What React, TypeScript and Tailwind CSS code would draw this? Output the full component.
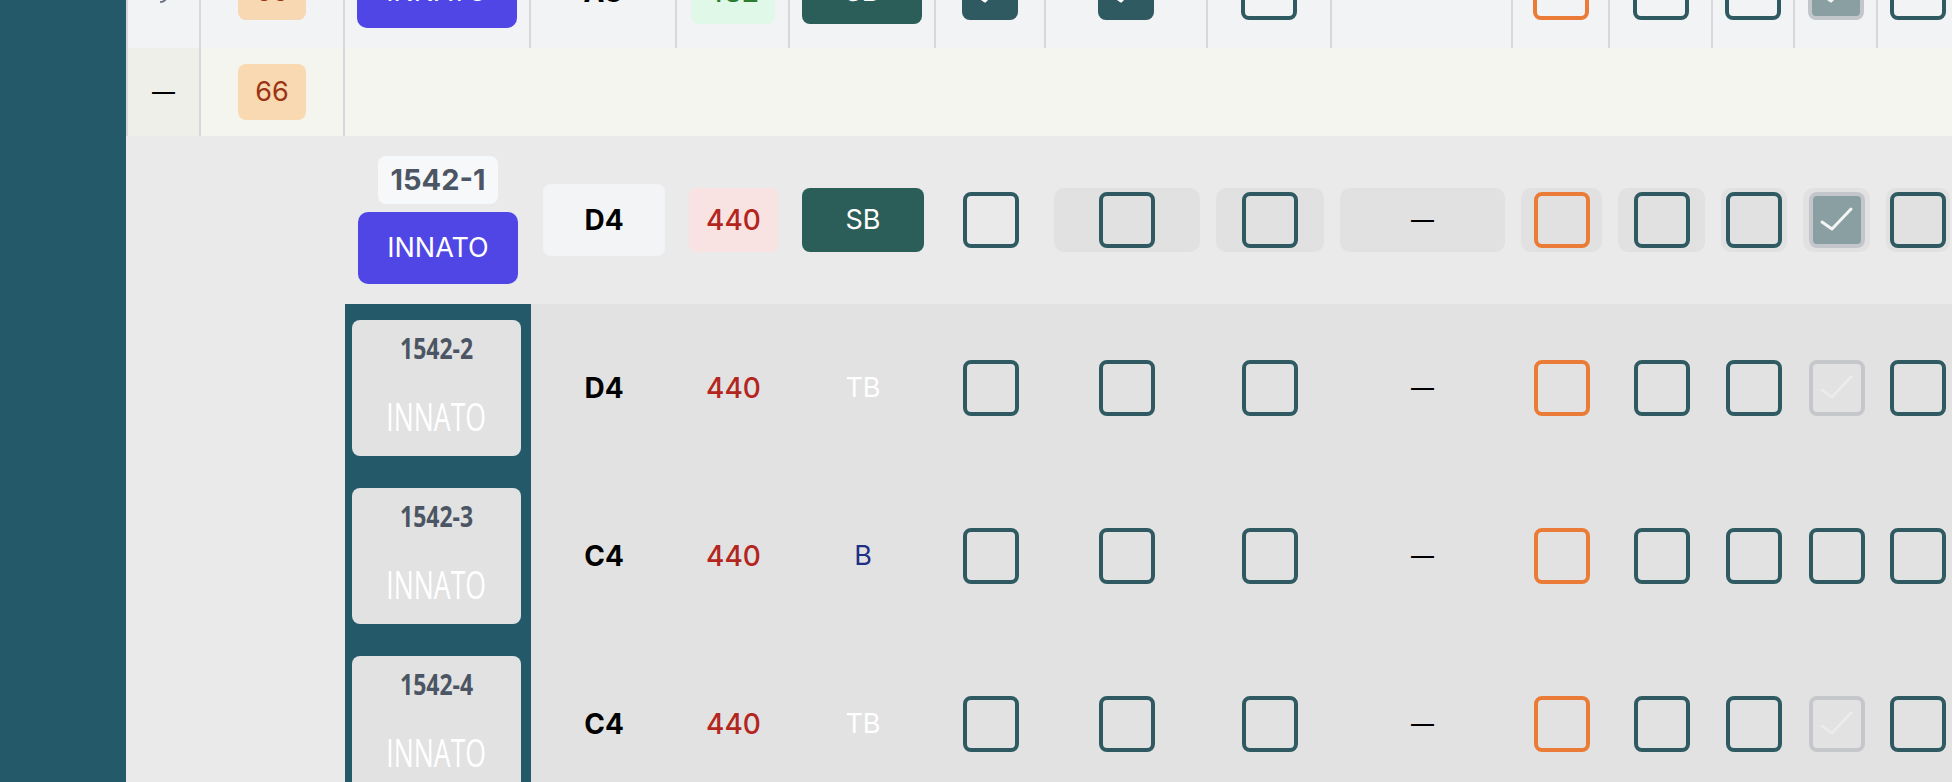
import React from "react";

const COLS =
  "grid grid-cols-[75px_144px_186px_146px_113px_146px_110px_162px_124px_181px_97px_103px_82px_83px_80px]";

type BoxKind = "teal" | "orange" | "filled" | "gray" | "ghost";

function Check({ color }: { color: string }) {
  return (
    <svg viewBox="0 0 48 48" className="block h-full w-full" fill="none">
      <polyline
        points="9,26 19,33 38,13"
        stroke={color}
        strokeWidth="3"
        strokeLinecap="round"
        strokeLinejoin="round"
      />
    </svg>
  );
}

function Box({ kind }: { kind: BoxKind }) {
  const cls: Record<BoxKind, string> = {
    teal: "border-4 border-[#2f5a61]",
    orange: "border-4 border-[#ea7c38]",
    filled: "border-4 border-[#2f5a61] bg-[#2f5a61]",
    gray: "border-4 border-[#c3c6ca] bg-[#8a9fa2]",
    ghost: "border-4 border-[#c5c7cb]",
  };
  return (
    <div className={`h-14 w-14 shrink-0 rounded-lg ${cls[kind]}`}>
      {kind === "filled" && <Check color="#ffffff" />}
      {kind === "gray" && <Check color="#f4f5f5" />}
      {kind === "ghost" && <Check color="#ebebeb" />}
    </div>
  );
}

function Cell({ children, className = "" }: { children?: React.ReactNode; className?: string }) {
  return <div className={`flex items-center justify-center ${className}`}>{children}</div>;
}

function Holder({ children }: { children: React.ReactNode }) {
  return (
    <div className="mx-2 flex h-16 w-full items-center justify-center rounded-[10px] bg-[#e1e1e1]">
      {children}
    </div>
  );
}

function Dash() {
  return <span className="text-[23px] leading-none text-black">—</span>;
}

const topBorder = "border-r-2 border-[#d7d8dd]";

function TopRow() {
  return (
    <div className={`${COLS} h-[112px] bg-[#f2f3f5]`}>
      <Cell className={`border-l-2 ${topBorder}`}>
        <svg width="24" height="24" viewBox="0 0 24 24" fill="none">
          <path d="M17 3 C17 10 16 17 13 20 C12 21.5 10.5 22 9 22" stroke="#6b7280" strokeWidth="2.2" strokeLinecap="round" />
        </svg>
      </Cell>
      <Cell className={topBorder}>
        <div className="flex h-14 w-[68px] items-center justify-center rounded-lg bg-[#f8d8b2] text-[27px] text-[#9a3412]">
          65
        </div>
      </Cell>
      <Cell className={topBorder}>
        <div className="flex h-[72px] w-40 items-center justify-center rounded-[10px] bg-[#4f46e5] text-[27px] text-white">
          INNATO
        </div>
      </Cell>
      <Cell className={`${topBorder} text-[28px] font-bold text-black`}>A3</Cell>
      <Cell className={topBorder}>
        <div className="flex h-16 w-[84px] items-center justify-center rounded-lg bg-[#dff8e7] text-[28px] font-medium text-[#2e7d32]">
          432
        </div>
      </Cell>
      <Cell className={topBorder}>
        <div className="flex h-16 w-[120px] items-center justify-center rounded-lg bg-[#2c5e59] text-[27px] text-white">
          SB
        </div>
      </Cell>
      <Cell className={topBorder}>
        <Box kind="filled" />
      </Cell>
      <Cell className={topBorder}>
        <Box kind="filled" />
      </Cell>
      <Cell className={topBorder}>
        <Box kind="teal" />
      </Cell>
      <Cell className={topBorder} />
      <Cell className={topBorder}>
        <Box kind="orange" />
      </Cell>
      <Cell className={topBorder}>
        <Box kind="teal" />
      </Cell>
      <Cell className={topBorder}>
        <Box kind="teal" />
      </Cell>
      <Cell className={topBorder}>
        <Box kind="gray" />
      </Cell>
      <Cell>
        <Box kind="teal" />
      </Cell>
    </div>
  );
}

function GroupRow() {
  return (
    <div className={`${COLS} h-[88px] bg-[#f4f5ef]`}>
      <Cell className={`border-l-2 ${topBorder} bg-[#efefe9]`}>
        <Dash />
      </Cell>
      <Cell className={topBorder}>
        <div className="flex h-14 w-[68px] items-center justify-center rounded-lg bg-[#f8d9b2] text-[27px] text-[#9a3412]">
          66
        </div>
      </Cell>
      <div className="col-span-13" />
    </div>
  );
}

function HeaderRow() {
  return (
    <div className={`${COLS} h-[168px] bg-[#eaeaea]`}>
      <div className="col-span-2" />
      <Cell className="flex-col gap-2">
        <div className="flex h-12 w-[120px] items-center justify-center rounded-lg bg-[#f7f8fa] text-[29px] font-bold text-[#4b5563]">
          1542-1
        </div>
        <div className="flex h-[72px] w-40 items-center justify-center rounded-[10px] bg-[#4f46e5] text-[27px] text-white">
          INNATO
        </div>
      </Cell>
      <Cell>
        <div className="mx-3 flex h-[72px] w-full items-center justify-center rounded-lg bg-[#f3f4f6] text-[28px] font-bold text-black">
          D4
        </div>
      </Cell>
      <Cell>
        <div className="mx-3 flex h-16 w-full items-center justify-center rounded-lg bg-[#f9e2e2] text-[28px] font-medium text-[#b3261e]">
          440
        </div>
      </Cell>
      <Cell>
        <div className="mx-3 flex h-16 w-full items-center justify-center rounded-lg bg-[#2c5e59] text-[27px] text-white">
          SB
        </div>
      </Cell>
      <Cell>
        <Box kind="teal" />
      </Cell>
      <Cell>
        <Holder>
          <Box kind="teal" />
        </Holder>
      </Cell>
      <Cell>
        <Holder>
          <Box kind="teal" />
        </Holder>
      </Cell>
      <Cell>
        <Holder>
          <Dash />
        </Holder>
      </Cell>
      <Cell>
        <Holder>
          <Box kind="orange" />
        </Holder>
      </Cell>
      <Cell>
        <Holder>
          <Box kind="teal" />
        </Holder>
      </Cell>
      <Cell>
        <Holder>
          <Box kind="teal" />
        </Holder>
      </Cell>
      <Cell>
        <Holder>
          <Box kind="gray" />
        </Holder>
      </Cell>
      <Cell>
        <Holder>
          <Box kind="teal" />
        </Holder>
      </Cell>
    </div>
  );
}

type Sub = { id: string; note: string; voice: string; voiceClass: string; fourth: BoxKind };

const SUBS: Sub[] = [
  { id: "1542-2", note: "D4", voice: "TB", voiceClass: "text-white", fourth: "ghost" },
  { id: "1542-3", note: "C4", voice: "B", voiceClass: "text-[#1e2f86]", fourth: "teal" },
  { id: "1542-4", note: "C4", voice: "TB", voiceClass: "text-white", fourth: "ghost" },
];

function SubRow({ s }: { s: Sub }) {
  return (
    <div className={`${COLS} h-[168px] bg-[#e2e2e2]`}>
      <div className="col-span-2 bg-[#eaeaea]" />
      <div className="flex bg-[#24596a] py-4 pr-[10px] pl-[7px]">
        <div className="flex w-full flex-col items-center rounded-lg bg-[#e2e2e2] pt-3 font-['Open_Sans',sans-serif]">
          <span className="inline-block scale-x-[0.82] text-[28px] leading-8 font-bold text-[#4b5563]">
            {s.id}
          </span>
          <span className="mt-8 inline-block scale-x-[0.7] text-[38px] leading-10 font-normal text-white">
            INNATO
          </span>
        </div>
      </div>
      <Cell className="text-[28px] font-bold text-black">{s.note}</Cell>
      <Cell className="text-[28px] font-medium text-[#b3261e]">440</Cell>
      <Cell className={`text-[27px] ${s.voiceClass}`}>{s.voice}</Cell>
      <Cell>
        <Box kind="teal" />
      </Cell>
      <Cell>
        <Box kind="teal" />
      </Cell>
      <Cell>
        <Box kind="teal" />
      </Cell>
      <Cell>
        <Dash />
      </Cell>
      <Cell>
        <Box kind="orange" />
      </Cell>
      <Cell>
        <Box kind="teal" />
      </Cell>
      <Cell>
        <Box kind="teal" />
      </Cell>
      <Cell>
        <Box kind={s.fourth} />
      </Cell>
      <Cell>
        <Box kind="teal" />
      </Cell>
    </div>
  );
}

export default function App() {
  return (
    <div className="flex h-[782px] w-[1952px] overflow-hidden bg-[#eaeaea] font-[Inter,'Noto_Sans',sans-serif]">
      <aside className="w-[126px] shrink-0 bg-[#24596a]" />
      <main className="min-w-0 flex-1 overflow-hidden">
        <div className="-mt-16 w-[1832px]">
          <TopRow />
          <GroupRow />
          <HeaderRow />
          {SUBS.map((s) => (
            <SubRow key={s.id} s={s} />
          ))}
        </div>
      </main>
    </div>
  );
}
